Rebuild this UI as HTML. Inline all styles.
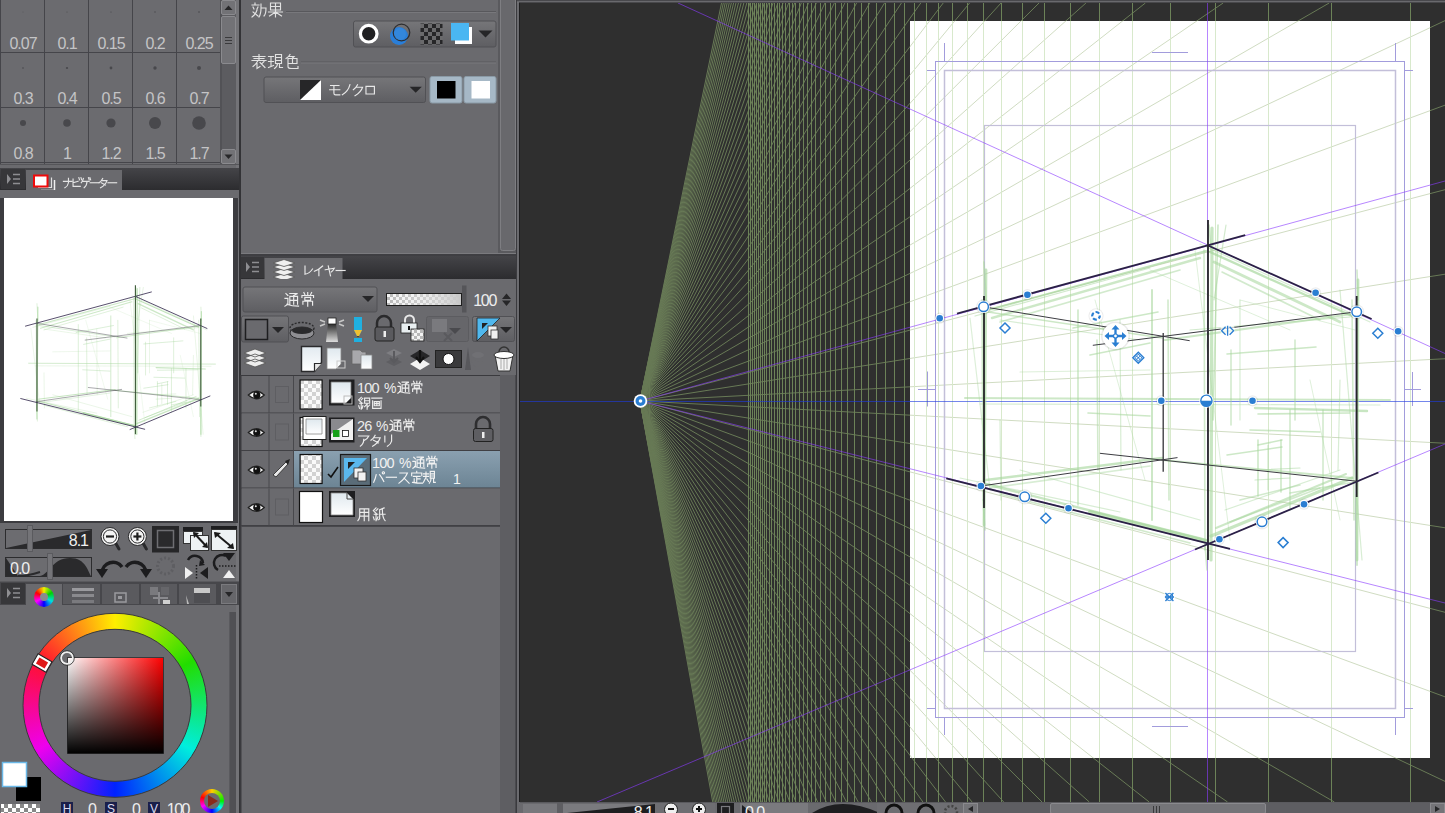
<!DOCTYPE html>
<html><head><meta charset="utf-8"><style>
html,body{margin:0;padding:0;width:1445px;height:813px;overflow:hidden;background:#6a6a6e;position:relative}
svg text{font-family:"Liberation Sans",sans-serif}
</style></head><body>
<svg width="1445" height="813" viewBox="0 0 1445 813" style="position:absolute;left:0;top:0">
<defs><clipPath id="cv"><rect x="520" y="3" width="925" height="799"/></clipPath>
<clipPath id="paper"><rect x="910" y="21" width="520" height="737"/></clipPath>
<clipPath id="navc"><rect x="4" y="198" width="229" height="323"/></clipPath></defs>
<rect x="0" y="0" width="241" height="813" fill="#6a6a6e"/><rect x="0" y="0" width="220" height="164" fill="#6b6b6f"/><path d="M0.5 0V164M44.5 0V164M88.5 0V164M132.5 0V164M176.5 0V164M0 52.5H220M0 107.5H220M0 162.5H220" stroke="#45454a" stroke-width="1"/><circle cx="23" cy="12" r="0.4" fill="#48484c"/><text x="23" y="48.5" font-size="16" fill="#c4c4c6" text-anchor="middle" letter-spacing="-1">0.07</text><circle cx="67" cy="12" r="0.5" fill="#48484c"/><text x="67" y="48.5" font-size="16" fill="#c4c4c6" text-anchor="middle" letter-spacing="-1">0.1</text><circle cx="111" cy="12" r="0.6" fill="#48484c"/><text x="111" y="48.5" font-size="16" fill="#c4c4c6" text-anchor="middle" letter-spacing="-1">0.15</text><circle cx="155" cy="12" r="0.7" fill="#48484c"/><text x="155" y="48.5" font-size="16" fill="#c4c4c6" text-anchor="middle" letter-spacing="-1">0.2</text><circle cx="199" cy="12" r="0.8" fill="#48484c"/><text x="199" y="48.5" font-size="16" fill="#c4c4c6" text-anchor="middle" letter-spacing="-1">0.25</text><circle cx="23" cy="68" r="0.8" fill="#48484c"/><text x="23" y="104" font-size="16" fill="#c4c4c6" text-anchor="middle" letter-spacing="-1">0.3</text><circle cx="67" cy="68" r="1.1" fill="#48484c"/><text x="67" y="104" font-size="16" fill="#c4c4c6" text-anchor="middle" letter-spacing="-1">0.4</text><circle cx="111" cy="68" r="1.4" fill="#48484c"/><text x="111" y="104" font-size="16" fill="#c4c4c6" text-anchor="middle" letter-spacing="-1">0.5</text><circle cx="155" cy="68" r="1.7" fill="#48484c"/><text x="155" y="104" font-size="16" fill="#c4c4c6" text-anchor="middle" letter-spacing="-1">0.6</text><circle cx="199" cy="68" r="2.0" fill="#48484c"/><text x="199" y="104" font-size="16" fill="#c4c4c6" text-anchor="middle" letter-spacing="-1">0.7</text><circle cx="23" cy="123" r="3.0" fill="#48484c"/><text x="23" y="159" font-size="16" fill="#c4c4c6" text-anchor="middle" letter-spacing="-1">0.8</text><circle cx="67" cy="123" r="3.8" fill="#48484c"/><text x="67" y="159" font-size="16" fill="#c4c4c6" text-anchor="middle" letter-spacing="-1">1</text><circle cx="111" cy="123" r="4.6" fill="#48484c"/><text x="111" y="159" font-size="16" fill="#c4c4c6" text-anchor="middle" letter-spacing="-1">1.2</text><circle cx="155" cy="123" r="6.0" fill="#48484c"/><text x="155" y="159" font-size="16" fill="#c4c4c6" text-anchor="middle" letter-spacing="-1">1.5</text><circle cx="199" cy="123" r="6.8" fill="#48484c"/><text x="199" y="159" font-size="16" fill="#c4c4c6" text-anchor="middle" letter-spacing="-1">1.7</text><rect x="220" y="0" width="16" height="164" fill="#5c5c60"/><rect x="220.5" y="0" width="1" height="164" fill="#48484c"/><rect x="221.5" y="0.5" width="14" height="14" rx="1.5" fill="#727276" stroke="#8a8a8e" stroke-width="1"/><path d="M224.5 10.0H232.5L228.5 5.5Z" fill="#262628"/><rect x="221.5" y="149.5" width="14" height="14" rx="1.5" fill="#727276" stroke="#8a8a8e" stroke-width="1"/><path d="M224.5 154.5H232.5L228.5 159.0Z" fill="#262628"/><rect x="221.5" y="16.5" width="14" height="47" rx="1.5" fill="#727276" stroke="#8a8a8e" stroke-width="1"/><path d="M225 37.5H232M225 40.5H232M225 43.5H232" stroke="#3a3a3c" stroke-width="1"/><rect x="236" y="0" width="3" height="813" fill="#737377"/><rect x="239" y="0" width="2" height="813" fill="#333336"/><rect x="0" y="164" width="239" height="1" fill="#555559"/><defs><linearGradient id="tabg" x1="0" y1="0" x2="0" y2="1"><stop offset="0" stop-color="#444448"/><stop offset="1" stop-color="#2c2c2f"/></linearGradient></defs><rect x="0" y="168" width="239" height="22" fill="url(#tabg)"/><rect x="1" y="169" width="24" height="20" fill="#37373a"/><path d="M7 174V184L11 179Z" fill="#8e8e92"/><path d="M13 174.5H20M13 179H20M13 183.5H20" stroke="#8e8e92" stroke-width="1.6"/><rect x="26" y="170" width="96" height="28" fill="#6a6a6e"/><path d="M41 190.5H54.5V180" fill="none" stroke="#f0f0f0" stroke-width="1.5"/><path d="M38 187.5H51.5V177.5" fill="none" stroke="#e0e0e0" stroke-width="1.2"/><rect x="34" y="175.5" width="13.5" height="11" fill="#ffffff" stroke="#ee0a0a" stroke-width="2"/><g fill="none" stroke="#e4e4e4" stroke-width="1.60" stroke-linecap="square"><path transform="translate(62.00,177.00) scale(0.7188)" d="M2 6H14M9 2V8Q8 13 4 15"/><path transform="translate(70.91,177.00) scale(0.7188)" d="M3 3V13H13M3 8L10 6M11 1L12 4M14 1L15 4"/><path transform="translate(79.83,177.00) scale(0.7188)" d="M5 2Q4 6 2 8M4 6H13M10 6Q10 12 6 15M12 1L13 4M14 1L15 4"/><path transform="translate(88.74,177.00) scale(0.7188)" d="M2 8H14"/><path transform="translate(97.65,177.00) scale(0.7188)" d="M7 2Q5 6 2 8M6 5H13Q11 11 4 15M5 8L11 11"/><path transform="translate(106.56,177.00) scale(0.7188)" d="M2 8H14"/></g><rect x="0" y="190" width="239" height="8" fill="#6a6a6e"/><rect x="0" y="198" width="4" height="325" fill="#3c3c40"/><rect x="233" y="198" width="5" height="325" fill="#3c3c40"/><rect x="4" y="198" width="229" height="323" fill="#ffffff"/><rect x="4" y="521" width="229" height="2" fill="#3c3c40"/><rect x="5.5" y="529.5" width="86" height="19" fill="#6c6c70" stroke="#2c2c2e" stroke-width="1"/><path d="M6 548L91 530V548Z" fill="#2a2a2c"/><text x="88" y="546" font-size="16" fill="#f0f0f0" text-anchor="end" letter-spacing="-1">8.1</text><rect x="27.5" y="525.5" width="5" height="26" fill="#747478" stroke="#5a5a5e" stroke-width="1"/><rect x="5.5" y="557.5" width="86" height="19" fill="#6c6c70" stroke="#2c2c2e" stroke-width="1"/><path d="M6 558L18 576H6Z" fill="#2a2a2c"/><path d="M40 576C50 574 52 558 70 558C86 558 88 572 91 576Z" fill="#2a2a2c"/><path d="M18 576Q28 576 40 572" stroke="#2a2a2c" stroke-width="2" fill="none"/><text x="10" y="574" font-size="16" fill="#f0f0f0" letter-spacing="-1">0.0</text><rect x="47.5" y="553.5" width="5" height="26" fill="#747478" stroke="#5a5a5e" stroke-width="1"/><path d="M115 542L119 549" stroke="#2a2a2c" stroke-width="3" stroke-linecap="round"/><circle cx="110" cy="536.5" r="9" fill="#f4f4f4" stroke="#2a2a2c" stroke-width="1"/><circle cx="110" cy="536.5" r="6.6" fill="#f4f4f4" stroke="#2a2a2c" stroke-width="1"/><path d="M106 536.5H114" stroke="#1e1e1e" stroke-width="2.2"/><path d="M142.4 542L146.4 549" stroke="#2a2a2c" stroke-width="3" stroke-linecap="round"/><circle cx="137.4" cy="536.5" r="9" fill="#f4f4f4" stroke="#2a2a2c" stroke-width="1"/><circle cx="137.4" cy="536.5" r="6.6" fill="#f4f4f4" stroke="#2a2a2c" stroke-width="1"/><path d="M133.4 536.5H141.4" stroke="#1e1e1e" stroke-width="2.2"/><path d="M137.4 532.5V540.5" stroke="#1e1e1e" stroke-width="2.2"/><rect x="152" y="526" width="27" height="26.5" fill="#262628"/><rect x="157.5" y="530.5" width="16" height="17" fill="#2a2a2c" stroke="#6e6e72" stroke-width="1.5"/><rect x="183" y="527" width="20" height="4" fill="#1e1e20"/><rect x="183.5" y="531.5" width="19" height="12" fill="#eef2f4" stroke="#333" stroke-width="1"/><rect x="190.5" y="535.5" width="18" height="15" fill="#eef2f4" stroke="#333" stroke-width="1"/><path d="M194 533L207 547" stroke="#1a1a1a" stroke-width="2"/><path d="M193 532l6 1l-5 5zM208 548l-6 -1l5 -5z" fill="#1a1a1a"/><rect x="211" y="526" width="26" height="4" fill="#1e1e20"/><rect x="211.5" y="529.5" width="25" height="21" fill="#eef2f4" stroke="#333" stroke-width="1"/><path d="M215 533L233 548" stroke="#1a1a1a" stroke-width="2"/><path d="M214 532l7 1l-6 5zM234 549l-7 -1l6 -5z" fill="#1a1a1a"/><path d="M102 573A11 11 0 0 1 122 567" stroke="#1c1c1e" stroke-width="3.5" fill="none"/><path d="M96 569L108 569L102 578Z" fill="#1c1c1e"/><path d="M126 567A11 11 0 0 1 146 573" stroke="#1c1c1e" stroke-width="3.5" fill="none"/><path d="M140 569L152 569L146 578Z" fill="#1c1c1e"/><circle cx="165.5" cy="566" r="8" fill="none" stroke="#5e5e62" stroke-width="3" stroke-dasharray="2 2"/><path d="M188 560A8 8 0 0 1 203 563" stroke="#1c1c1e" stroke-width="2.5" fill="none"/><path d="M200 560l5 5l-6 1z" fill="#1c1c1e"/><path d="M185 567V579L193 573Z" fill="#f0f0f0"/><path d="M208 567V579L200 573Z" fill="#1c1c1e"/><path d="M196.5 565V580" stroke="#1c1c1e" stroke-width="1.5" stroke-dasharray="1.5 1.5"/><path d="M226 556A8 8 0 0 0 218 570" stroke="#1c1c1e" stroke-width="2.5" fill="none"/><path d="M223 553h12l-6 8z" fill="#1c1c1e"/><path d="M223 578h12l-6 -8z" fill="#f0f0f0"/><path d="M219 566H237" stroke="#1c1c1e" stroke-width="1.5" stroke-dasharray="1.5 1.5"/><rect x="0" y="581" width="239" height="1" fill="#5a5a5e"/><rect x="0" y="582" width="239" height="23" fill="#47474b"/><rect x="1" y="583" width="24" height="21" fill="#37373a"/><path d="M7 588V598L11 593Z" fill="#8e8e92"/><path d="M13 588.5H20M13 593H20M13 597.5H20" stroke="#8e8e92" stroke-width="1.6"/><rect x="26" y="584" width="36" height="22" fill="#6a6a6e"/><defs><clipPath id="smallw"><circle cx="44" cy="597" r="10"/></clipPath></defs><g clip-path="url(#smallw)"><foreignObject x="33" y="586" width="22" height="22"><div style="width:22px;height:22px;background:conic-gradient(from 0deg,#f0f000,#00d000,#00e0e0,#0000ff,#ff00ff,#ff0000,#f0f000)"></div></foreignObject></g><circle cx="44" cy="597" r="4" fill="#8a8a8e"/><rect x="63" y="584" width="37" height="20" fill="#5a5a5e"/><rect x="102" y="584" width="37" height="20" fill="#5a5a5e"/><rect x="141" y="584" width="36" height="20" fill="#5a5a5e"/><rect x="179" y="584" width="37" height="20" fill="#5a5a5e"/><rect x="72" y="588" width="22" height="3" fill="#9a9a9e"/><rect x="72" y="594" width="22" height="3" fill="#8a8a8e"/><rect x="72" y="600" width="22" height="3" fill="#7a7a7e"/><rect x="115" y="593" width="11" height="9" fill="none" stroke="#9a9a9e" stroke-width="1.5"/><rect x="118" y="596" width="4" height="3" fill="#9a9a9e"/><rect x="150" y="587" width="8" height="8" fill="#7a7a7e"/><rect x="161" y="587" width="8" height="8" fill="#66666a"/><rect x="163" y="600" width="7" height="4" fill="#d0d0d0"/><path d="M159 592V604M153 598H168" stroke="#8a8a8e" stroke-width="2"/><rect x="194" y="588" width="16" height="5" fill="#c8c8c8"/><rect x="194" y="593" width="16" height="10" fill="#4e4e52"/><path d="M186 595L189 604H187Z" fill="#bbb"/><rect x="221.5" y="584.5" width="15" height="19" fill="#66666a" stroke="#7a7a7e" stroke-width="1"/><path d="M225 592H233L229 597Z" fill="#262628"/><rect x="229" y="612" width="7" height="201" fill="#505054"/><rect x="229" y="612" width="1" height="201" fill="#5a5a5e"/><defs><mask id="ringm"><rect x="0" y="600" width="240" height="213" fill="#000"/><circle cx="115" cy="705.3" r="92" fill="#fff"/><circle cx="115" cy="705.3" r="76" fill="#000"/></mask><linearGradient id="svw" x1="0" y1="0" x2="1" y2="0"><stop offset="0" stop-color="#fff"/><stop offset="1" stop-color="#ff0000"/></linearGradient><linearGradient id="svb" x1="0" y1="0" x2="0" y2="1"><stop offset="0" stop-color="#000" stop-opacity="0"/><stop offset="1" stop-color="#000" stop-opacity="1"/></linearGradient></defs><g mask="url(#ringm)"><foreignObject x="23" y="613" width="184" height="185"><div style="width:184px;height:185px;background:conic-gradient(from 0deg,#ffee00,#22dd00 60deg,#00eedd 120deg,#0022ff 180deg,#ee00ee 240deg,#ff1030 300deg,#ffee00 360deg)"></div></foreignObject></g><circle cx="115" cy="705.3" r="92" fill="none" stroke="#3a3a3c" stroke-width="1"/><circle cx="115" cy="705.3" r="76" fill="none" stroke="#3a3a3c" stroke-width="1"/><rect x="67.5" y="657.5" width="96" height="96" fill="url(#svw)" stroke="#3a3a3c" stroke-width="1"/><rect x="67.5" y="657.5" width="96" height="96" fill="url(#svb)"/><circle cx="67" cy="658" r="6" fill="none" stroke="#f0f0f0" stroke-width="2"/><circle cx="67" cy="658" r="7.3" fill="none" stroke="#2a2a2a" stroke-width="0.8"/><g transform="translate(42,663) rotate(30)"><rect x="-8" y="-6" width="16" height="12" fill="#fff" stroke="#222" stroke-width="1"/><rect x="-5" y="-3.5" width="10" height="7" fill="#e01818"/></g><rect x="16" y="777" width="25" height="24" fill="#000"/><rect x="2.5" y="762.5" width="24" height="24" fill="#fff" stroke="#6ab8e8" stroke-width="1.5"/><defs><pattern id="chk" x="0" y="0" width="8" height="8" patternUnits="userSpaceOnUse"><rect width="8" height="8" fill="#fff"/><rect width="4" height="4" fill="#888"/><rect x="4" y="4" width="4" height="4" fill="#888"/></pattern></defs><rect x="1" y="804" width="39" height="9" fill="url(#chk)"/><rect x="61" y="802" width="12" height="11" fill="#1a1f4a"/><text x="67" y="813" font-size="12" fill="#dcdcf0" text-anchor="middle">H</text><rect x="105" y="802" width="12" height="11" fill="#1a1f4a"/><text x="111" y="813" font-size="12" fill="#dcdcf0" text-anchor="middle">S</text><rect x="148" y="802" width="12" height="11" fill="#1a1f4a"/><text x="154" y="813" font-size="12" fill="#dcdcf0" text-anchor="middle">V</text><text x="96" y="815" font-size="16" fill="#eeeeee" text-anchor="end" letter-spacing="-1">0</text><text x="140" y="815" font-size="16" fill="#eeeeee" text-anchor="end" letter-spacing="-1">0</text><text x="189" y="815" font-size="16" fill="#eeeeee" text-anchor="end" letter-spacing="-1.5">100</text><defs><mask id="smr"><rect x="195" y="785" width="35" height="30" fill="#000"/><circle cx="212" cy="801" r="12" fill="#fff"/><circle cx="212" cy="801" r="8" fill="#000"/></mask></defs><g mask="url(#smr)"><foreignObject x="199" y="788" width="26" height="26"><div style="width:26px;height:26px;background:conic-gradient(from 0deg,#ffcc00,#00ee00 90deg,#00ffff 130deg,#0000ff 180deg,#ff00ff 240deg,#ff0000 290deg,#ffcc00 360deg)"></div></foreignObject></g><path d="M208 795L218 801L208 807Z" fill="#8a2a1a"/><rect x="241" y="0" width="276" height="813" fill="#6a6a6e"/><defs><linearGradient id="btng" x1="0" y1="0" x2="0" y2="1"><stop offset="0" stop-color="#767679"/><stop offset="1" stop-color="#5e5e62"/></linearGradient><linearGradient id="docg" x1="0" y1="0" x2="0" y2="1"><stop offset="0" stop-color="#dfe8ee"/><stop offset="1" stop-color="#ffffff"/></linearGradient><linearGradient id="selg" x1="0" y1="0" x2="0" y2="1"><stop offset="0" stop-color="#8aa0b0"/><stop offset="1" stop-color="#6c8494"/></linearGradient><linearGradient id="opg" x1="0" y1="0" x2="1" y2="0"><stop offset="0" stop-color="#fff" stop-opacity="0"/><stop offset="1" stop-color="#c8c8c8" stop-opacity="1"/></linearGradient><pattern id="chk2" x="0" y="0" width="8" height="8" patternUnits="userSpaceOnUse"><rect width="8" height="8" fill="#fafafa"/><rect width="4" height="4" fill="#d2d2d2"/><rect x="4" y="4" width="4" height="4" fill="#d2d2d2"/></pattern><pattern id="chk3" x="0" y="0" width="6" height="6" patternUnits="userSpaceOnUse"><rect width="6" height="6" fill="#f4f4f4"/><rect width="3" height="3" fill="#b8b8b8"/><rect x="3" y="3" width="3" height="3" fill="#b8b8b8"/></pattern><pattern id="chk4" x="0" y="0" width="8" height="8" patternUnits="userSpaceOnUse"><rect width="8" height="8" fill="#6a6a6c"/><rect width="4" height="4" fill="#262628"/><rect x="4" y="4" width="4" height="4" fill="#262628"/></pattern></defs><g fill="none" stroke="#e2e2e2" stroke-width="1.15" stroke-linecap="square"><path transform="translate(251.00,2.00) scale(1.0000)" d="M4 1V3M1 3H8M2 5L3 7M7 5L6 7M6 8Q5 12 1 15M2 10L7 14M10 2V6Q10 12 8 15M10 6H15Q15 12 13 14"/><path transform="translate(267.50,2.00) scale(1.0000)" d="M3 1H13V8H3ZM3 4.5H13M8 1V15M1 10H15M8 10L2 14M8 10L14 14"/></g><path d="M286 11.5H496" stroke="#58585c" stroke-width="1"/><path d="M286 12.5H496" stroke="#78787c" stroke-width="1"/><rect x="353.5" y="21" width="142.5" height="26" rx="2" fill="url(#btng)" stroke="#515155" stroke-width="1"/><circle cx="368.7" cy="33.7" r="8.3" fill="#202022" stroke="#ffffff" stroke-width="3.2"/><circle cx="399" cy="36" r="9" fill="#2a7ed8"/><circle cx="401.5" cy="32.5" r="8.3" fill="none" stroke="#2e2e30" stroke-width="1.2"/><circle cx="400" cy="34" r="6" fill="#3a8ee0" fill-opacity="0.6"/><rect x="420.5" y="23.5" width="22" height="21" fill="url(#chk4)"/><rect x="455" y="27" width="17" height="17" fill="#ffffff"/><rect x="451" y="23" width="18" height="17.5" fill="#4ab6f2"/><path d="M478.5 30.5H492.5L485.5 37.5Z" fill="#262628"/><g fill="none" stroke="#e2e2e2" stroke-width="1.15" stroke-linecap="square"><path transform="translate(251.00,53.50) scale(1.0000)" d="M8 1V7M2 3H14M3 5H13M1 7H15M7 7Q5 11 2 13M6 10V15L9 13M9 9L14 14M13 8L11 10"/><path transform="translate(267.50,53.50) scale(1.0000)" d="M1 3H6M1 8H6M3.5 3V13M1 14L6 12M8 1H14V10H8ZM8 4H14M8 7H14M10 10Q10 13 7 15M12 10V14H15"/><path transform="translate(284.00,53.50) scale(1.0000)" d="M6 1Q5 3 2 5M5 3H10L8 5M4 5H13V10H4ZM8.5 5V10M4 10V13Q4 15 7 15H14V13"/></g><path d="M301 62H496" stroke="#58585c" stroke-width="1"/><path d="M301 63H496" stroke="#78787c" stroke-width="1"/><rect x="264" y="77" width="161.5" height="25.5" rx="2" fill="url(#btng)" stroke="#515155" stroke-width="1"/><rect x="300" y="80" width="21" height="20" fill="#ffffff"/><path d="M300 80H321L300 100Z" fill="#262628"/><g fill="none" stroke="#e8e8e8" stroke-width="1.36" stroke-linecap="square"><path transform="translate(328.00,83.00) scale(0.8438)" d="M3 3H13M2 8H14M7 3V12Q7 14 9 14H14"/><path transform="translate(339.81,83.00) scale(0.8438)" d="M12 2Q10 10 3 14"/><path transform="translate(351.62,83.00) scale(0.8438)" d="M7 2Q5 6 2 8M6 5H13Q11 11 4 15"/><path transform="translate(363.44,83.00) scale(0.8438)" d="M3 4H13V13H3Z"/></g><path d="M409.6 86.8H421.8L415.7 92.7Z" fill="#262628"/><rect x="430" y="76.5" width="32" height="26.5" rx="2" fill="#a6b8c6" stroke="#8a9aa6" stroke-width="1"/><rect x="464" y="76.5" width="32" height="26.5" rx="2" fill="#a6b8c6" stroke="#8a9aa6" stroke-width="1"/><rect x="437" y="81" width="18.5" height="17.5" fill="#000"/><rect x="471.5" y="81" width="18.5" height="17.5" fill="#fff"/><rect x="498" y="0" width="19" height="255" fill="#5a5a5e"/><rect x="500.5" y="-3" width="15" height="253.5" rx="2" fill="#68686c" stroke="#7e7e82" stroke-width="1"/><rect x="516" y="0" width="1" height="255" fill="#3e3e42"/><rect x="241" y="253" width="276" height="1" fill="#7a7a7e"/><rect x="241" y="254" width="276" height="2" fill="#3e3e42"/><rect x="241" y="256" width="276" height="23" fill="url(#tabg)"/><rect x="241" y="257" width="23" height="21" fill="#37373a"/><path d="M246 262V272L250 267Z" fill="#8e8e92"/><path d="M252 262.5H259M252 267H259M252 271.5H259" stroke="#8e8e92" stroke-width="1.6"/><rect x="264.5" y="258" width="78" height="25" fill="#6a6a6e"/><path d="M273 277L284 273.5L295 277L284 280.5Z" fill="#f0f0f0" stroke="#555" stroke-width="0.8"/><path d="M273 272L284 268.5L295 272L284 275.5Z" fill="#f0f0f0" stroke="#555" stroke-width="0.8"/><path d="M273 267L284 263.5L295 267L284 270.5Z" fill="#f0f0f0" stroke="#555" stroke-width="0.8"/><path d="M273 263L284 259.5L295 263L284 266.5Z" fill="#f0f0f0" stroke="#555" stroke-width="0.8"/><g fill="none" stroke="#e8e8e8" stroke-width="1.53" stroke-linecap="square"><path transform="translate(302.00,264.50) scale(0.7500)" d="M4 2V13Q10 12 14 6"/><path transform="translate(312.88,264.50) scale(0.7500)" d="M13 2Q8 7 2 9M8 6V15"/><path transform="translate(323.75,264.50) scale(0.7500)" d="M2 7L14 5Q12 9 10 10M6 2L9 15"/><path transform="translate(334.62,264.50) scale(0.7500)" d="M2 8H14"/></g><rect x="241" y="279" width="276" height="534" fill="#6a6a6e"/><rect x="243" y="287" width="134" height="25" rx="2" fill="url(#btng)" stroke="#515155" stroke-width="1"/><g fill="none" stroke="#ececec" stroke-width="1.19" stroke-linecap="square"><path transform="translate(284.00,291.60) scale(0.9688)" d="M6 2H14L10 4M6 5H14V13M6 5V13M6 9H14M10 5V13M2 2L4 4M1 7H4V13L1 15M3 13Q8 15 15 15"/><path transform="translate(299.98,291.60) scale(0.9688)" d="M8 1V3M4 1L5 3M12 1L11 3M2 6V4H14V6M5 6H11V9H5ZM3 13V10H13V14M8 9V15"/></g><path d="M362 296H374L368 302Z" fill="#262628"/><rect x="386.5" y="293.5" width="75" height="12" fill="url(#chk3)" stroke="#1e1e1e" stroke-width="1"/><rect x="387" y="294" width="74" height="11" fill="url(#opg)"/><rect x="462" y="285.5" width="4.5" height="27" fill="#555559"/><text x="496" y="305.5" font-size="16" fill="#eeeeee" text-anchor="end" letter-spacing="-1.3">100</text><path d="M502 299L506.5 293.5L511 299ZM502 300.5L506.5 306L511 300.5Z" fill="#262628"/><rect x="241.5" y="316" width="47" height="26" rx="2" fill="url(#btng)" stroke="#515155" stroke-width="1"/><rect x="245.5" y="319.5" width="22" height="20" fill="#6a6a6e" stroke="#1e1e20" stroke-width="1.5"/><path d="M272 327H284L278 333Z" fill="#262628"/><ellipse cx="302" cy="328" rx="12" ry="5.5" fill="none" stroke="#2a2a2c" stroke-width="1.4" stroke-dasharray="2 1.5"/><ellipse cx="302" cy="333" rx="12" ry="6" fill="#8e8e92" stroke="#2a2a2c" stroke-width="1"/><ellipse cx="302" cy="330.5" rx="10" ry="3.6" fill="#2a2a2c"/><path d="M328 323H336L338 342H326Z" fill="url(#lhg)"/><rect x="328" y="318" width="8" height="6" fill="#fff" stroke="#222" stroke-width="0.8"/><path d="M320 320L325 322M320 326L325 324M344 320L339 322M344 326L339 324" stroke="#c8c8c8" stroke-width="1.5"/><defs><linearGradient id="lhg" x1="0" y1="0" x2="0" y2="1"><stop offset="0" stop-color="#222"/><stop offset="1" stop-color="#ddd"/></linearGradient></defs><path d="M354 317H362V330L358 338L354 330Z" fill="#20b0e0"/><path d="M354 330L358 338L362 330Z" fill="#f0c030"/><path d="M357 336L358 338L359 336Z" fill="#222"/><rect x="354" y="338" width="8" height="4" fill="#20b0e0"/><path d="M377 327V323A7 7 0 0 1 391 323V327" stroke="#2a2a2c" stroke-width="2.5" fill="none"/><rect x="375" y="327" width="19" height="14" rx="2" fill="#5a5a5e" stroke="#222" stroke-width="1"/><rect x="383.5" y="331" width="2.5" height="6" fill="#eee"/><path d="M405 323V320A4.5 4.5 0 0 1 414 320V323" stroke="#e8e8e8" stroke-width="2" fill="none"/><rect x="401" y="323" width="16" height="10" fill="#e8eef0" stroke="#222" stroke-width="0.8"/><rect x="408" y="326" width="2" height="4" fill="#111"/><rect x="411" y="329" width="13" height="12" fill="url(#chk3)" stroke="#222" stroke-width="0.8"/><rect x="426.5" y="316.5" width="42" height="25" rx="2" fill="#66666a" stroke="#5c5c60" stroke-width="1"/><rect x="432" y="319" width="15" height="13" fill="#7a7a7e"/><path d="M449 328H461L455 334Z" fill="#4a4a4e"/><path d="M444 333L452 341M452 333L444 341" stroke="#5a5a5e" stroke-width="2"/><rect x="472.5" y="316.5" width="42" height="25" rx="2" fill="url(#btng)" stroke="#515155" stroke-width="1"/><path d="M477 318H500L477 341Z" fill="#50b8ee" stroke="#222" stroke-width="0.8"/><path d="M482 323H488L482 329Z" fill="#222"/><rect x="488" y="326" width="9" height="10" fill="#f0f0f0" stroke="#333" stroke-width="0.8"/><rect x="491" y="330" width="7" height="9" fill="#f0f0f0" stroke="#333" stroke-width="0.8"/><path d="M500 327H512L506 333Z" fill="#262628"/><path d="M255 349L266 353L255 357L244 353Z M255 354L266 358L255 362L244 358Z M255 359L266 363L255 367L244 363Z" fill="#eee" stroke="#555" stroke-width="0.8"/><path d="M301.5 346.5H321.5V362.5L314.5 371.5H301.5Z" fill="url(#docg2)" stroke="#2a2a2c" stroke-width="1.4"/><path d="M314.5 371.5V363.5H321.5" fill="#e8e8e8" stroke="#2a2a2c" stroke-width="1.2"/><defs><linearGradient id="docg2" x1="0" y1="0" x2="0" y2="1"><stop offset="0" stop-color="#e2eaf0"/><stop offset="1" stop-color="#ffffff"/></linearGradient></defs><path d="M327 348H341V364L336 369H327Z" fill="url(#docg)" stroke="#888" stroke-width="0.8"/><rect x="337" y="361" width="8" height="7" fill="none" stroke="#ccc" stroke-width="1"/><path d="M352 350H360L362 352H366V364H352Z" fill="#a8a8ac" stroke="#666" stroke-width="0.8"/><path d="M361 355H372V369H361Z" fill="url(#docg)" stroke="#888" stroke-width="0.8"/><path d="M386 353L394 349L402 353L394 357Z" fill="#7e7e82"/><path d="M386 362L394 358L402 362L394 366Z" fill="#5e5e62"/><path d="M394 351V362M390 358L394 362L398 358" stroke="#5a5a5e" stroke-width="2" fill="none"/><path d="M410 356L420 350L430 356L420 362Z" fill="#262628"/><path d="M410 364L420 358L430 364L420 370Z" fill="#f4f4f4"/><path d="M420 350V361M416 357L420 362L424 357" stroke="#111" stroke-width="2.2" fill="none"/><rect x="435.5" y="350.5" width="26" height="17" fill="#3a3a3c" stroke="#222" stroke-width="1"/><circle cx="448.5" cy="359" r="5.5" fill="#fff" stroke="#111" stroke-width="1"/><path d="M468 347L465 370L471 370Z" fill="#58585c"/><ellipse cx="478" cy="355" rx="6" ry="3" fill="#707074"/><path d="M470 360L484 362L476 368Z" fill="#6a6a6e"/><path d="M495 355A10 4 0 0 1 513 355L510 371H498Z" fill="#f2f2f2" stroke="#333" stroke-width="1"/><ellipse cx="504" cy="355" rx="10" ry="3.5" fill="#fff" stroke="#333" stroke-width="1"/><path d="M499 352A5 5 0 0 1 509 352" stroke="#333" stroke-width="1.5" fill="none"/><path d="M501 359V369M504 359V370M507 359V369" stroke="#aaa" stroke-width="1"/><rect x="241" y="375" width="259" height="1" fill="#3a3a3e"/><rect x="500" y="375" width="17" height="438" fill="#5e5e62"/><rect x="515" y="375" width="2" height="438" fill="#4a4a4e"/><rect x="240" y="375" width="1.5" height="438" fill="#3a3a3e"/><rect x="242" y="376" width="258" height="37" fill="#6a6a6e"/><rect x="241" y="412.5" width="259" height="1" fill="#404044"/><rect x="268.5" y="376" width="1" height="37" fill="#48484c"/><rect x="293" y="376" width="1" height="37" fill="#48484c"/><path d="M248.3 395Q256.3 387.5 264.3 395Q256.3 402.5 248.3 395Z" fill="#f4f4f4" stroke="#222" stroke-width="1.2"/><circle cx="256.8" cy="395" r="3.6" fill="#111"/><circle cx="255.8" cy="393.8" r="1" fill="#ddd"/><rect x="275.5" y="386.5" width="13" height="16" fill="none" stroke="#5e5e62" stroke-width="1"/><rect x="242" y="413.5" width="258" height="37" fill="#6a6a6e"/><rect x="241" y="450.0" width="259" height="1" fill="#404044"/><rect x="268.5" y="413.5" width="1" height="37" fill="#48484c"/><rect x="293" y="413.5" width="1" height="37" fill="#48484c"/><path d="M248.3 432.5Q256.3 425.0 264.3 432.5Q256.3 440.0 248.3 432.5Z" fill="#f4f4f4" stroke="#222" stroke-width="1.2"/><circle cx="256.8" cy="432.5" r="3.6" fill="#111"/><circle cx="255.8" cy="431.3" r="1" fill="#ddd"/><rect x="275.5" y="424.0" width="13" height="16" fill="none" stroke="#5e5e62" stroke-width="1"/><rect x="242" y="451" width="258" height="37" fill="#6a6a6e"/><rect x="294" y="451" width="206" height="37" fill="url(#selg)"/><rect x="241" y="487.5" width="259" height="1" fill="#404044"/><rect x="268.5" y="451" width="1" height="37" fill="#48484c"/><rect x="293" y="451" width="1" height="37" fill="#48484c"/><path d="M248.3 470Q256.3 462.5 264.3 470Q256.3 477.5 248.3 470Z" fill="#f4f4f4" stroke="#222" stroke-width="1.2"/><circle cx="256.8" cy="470" r="3.6" fill="#111"/><circle cx="255.8" cy="468.8" r="1" fill="#ddd"/><rect x="242" y="488.5" width="258" height="37" fill="#6a6a6e"/><rect x="241" y="525.0" width="259" height="1" fill="#404044"/><rect x="268.5" y="488.5" width="1" height="37" fill="#48484c"/><rect x="293" y="488.5" width="1" height="37" fill="#48484c"/><path d="M248.3 507.5Q256.3 500.0 264.3 507.5Q256.3 515.0 248.3 507.5Z" fill="#f4f4f4" stroke="#222" stroke-width="1.2"/><circle cx="256.8" cy="507.5" r="3.6" fill="#111"/><circle cx="255.8" cy="506.3" r="1" fill="#ddd"/><rect x="275.5" y="499.0" width="13" height="16" fill="none" stroke="#5e5e62" stroke-width="1"/><rect x="300.1" y="380.0" width="22" height="29" fill="url(#chk2)" stroke="#111" stroke-width="1.2"/><rect x="329" y="379.5" width="25.5" height="26" fill="#1e1e20"/><path d="M331 382H351V398L346 403H331Z" fill="url(#docg)" stroke="#777" stroke-width="0.8"/><rect x="344" y="396" width="8" height="8" fill="none" stroke="#bbb" stroke-width="1"/><text x="357" y="393" font-size="14.5" fill="#ececec" letter-spacing="-0.8">100</text><text x="384" y="393" font-size="14" fill="#ececec">%</text><g fill="none" stroke="#ececec" stroke-width="1.36" stroke-linecap="square"><path transform="translate(397.00,380.50) scale(0.8438)" d="M6 2H14L10 4M6 5H14V13M6 5V13M6 9H14M10 5V13M2 2L4 4M1 7H4V13L1 15M3 13Q8 15 15 15"/><path transform="translate(410.08,380.50) scale(0.8438)" d="M8 1V3M4 1L5 3M12 1L11 3M2 6V4H14V6M5 6H11V9H5ZM3 13V10H13V14M8 9V15"/></g><g fill="none" stroke="#ececec" stroke-width="1.36" stroke-linecap="square"><path transform="translate(357.00,396.50) scale(0.8438)" d="M2 4L5 1M5 4L7 2M2 4L6 8M3 8H7M5 8V15M2 11L3 14M7 11L6 14M9 2H15V8H9ZM9 5H15M12 8V15M9 12L11 10M15 10L13 12"/><path transform="translate(370.08,396.50) scale(0.8438)" d="M2 2H14M3 5V14H13V5M5 6H11V11H5ZM8 6V11M5 8.5H11"/></g><rect x="300.1" y="417.5" width="22" height="29" fill="url(#chk2)" stroke="#111" stroke-width="1.2"/><rect x="303" y="416.5" width="23" height="23" fill="#fff" stroke="#222" stroke-width="1"/><path d="M306 419H322V434H306Z" fill="url(#docg)" stroke="#888" stroke-width="0.8"/><rect x="329" y="417.5" width="25.5" height="25" fill="#1e1e20"/><rect x="331" y="419" width="22" height="21" fill="#f0f0f0"/><path d="M331 419H353L331 434Z" fill="#8a8a8e"/><rect x="333" y="430" width="6.5" height="7" fill="#18a018"/><rect x="342.5" y="430.5" width="6" height="6" fill="#fff" stroke="#111" stroke-width="0.8"/><text x="357" y="431" font-size="14.5" fill="#ececec" letter-spacing="-0.8">26</text><text x="376" y="431" font-size="14" fill="#ececec">%</text><g fill="none" stroke="#ececec" stroke-width="1.36" stroke-linecap="square"><path transform="translate(389.00,418.50) scale(0.8438)" d="M6 2H14L10 4M6 5H14V13M6 5V13M6 9H14M10 5V13M2 2L4 4M1 7H4V13L1 15M3 13Q8 15 15 15"/><path transform="translate(402.08,418.50) scale(0.8438)" d="M8 1V3M4 1L5 3M12 1L11 3M2 6V4H14V6M5 6H11V9H5ZM3 13V10H13V14M8 9V15"/></g><g fill="none" stroke="#ececec" stroke-width="1.36" stroke-linecap="square"><path transform="translate(357.00,433.50) scale(0.8438)" d="M2 3H14Q12 7 9 8M8 7Q8 12 4 15"/><path transform="translate(369.23,433.50) scale(0.8438)" d="M7 2Q5 6 2 8M6 5H13Q11 11 4 15M5 8L11 11"/><path transform="translate(381.47,433.50) scale(0.8438)" d="M4 3V10M12 2V9Q11 13 7 15"/></g><path d="M476 429V424A7 7 0 0 1 490 424V429" stroke="#2e2e30" stroke-width="2.6" fill="none"/><rect x="473.5" y="428.5" width="19.5" height="13" rx="2" fill="#5e5e62" stroke="#222" stroke-width="1"/><rect x="482" y="432" width="2.5" height="6" fill="#eee"/><path d="M273 475L286 462L288 464L276 477Z" fill="#e8e8e8" stroke="#222" stroke-width="0.8"/><path d="M285 461L290 459L288 465Z" fill="#222"/><rect x="300.1" y="454.5" width="22" height="29" fill="url(#chk2)" stroke="#111" stroke-width="1.2"/><path d="M328 474L331 477L338 467" stroke="#111" stroke-width="1.6" fill="none"/><rect x="340.5" y="454.5" width="30" height="31" fill="#5a6c78" stroke="#1a1a1a" stroke-width="1.2"/><path d="M344 458H367L344 482Z" fill="#5ab8ee"/><path d="M348 462H355L348 469Z" fill="#222"/><rect x="354" y="468" width="9" height="10" fill="#f2f2f2" stroke="#333" stroke-width="0.8"/><rect x="358" y="472" width="8" height="9" fill="#f2f2f2" stroke="#333" stroke-width="0.8"/><text x="372" y="468" font-size="14.5" fill="#f2f2f2" letter-spacing="-0.8">100</text><text x="399" y="468" font-size="14" fill="#f2f2f2">%</text><g fill="none" stroke="#f2f2f2" stroke-width="1.36" stroke-linecap="square"><path transform="translate(412.00,455.50) scale(0.8438)" d="M6 2H14L10 4M6 5H14V13M6 5V13M6 9H14M10 5V13M2 2L4 4M1 7H4V13L1 15M3 13Q8 15 15 15"/><path transform="translate(425.08,455.50) scale(0.8438)" d="M8 1V3M4 1L5 3M12 1L11 3M2 6V4H14V6M5 6H11V9H5ZM3 13V10H13V14M8 9V15"/></g><g fill="none" stroke="#f2f2f2" stroke-width="1.36" stroke-linecap="square"><path transform="translate(372.00,470.50) scale(0.8438)" d="M5 5Q4 10 2 14M9 5Q12 9 14 13M13.5 1.5A1.3 1.3 0 1 1 13.49 1.5"/><path transform="translate(384.66,470.50) scale(0.8438)" d="M2 8H14"/><path transform="translate(397.31,470.50) scale(0.8438)" d="M3 3H12Q9 10 2 15M8 9L14 15"/><path transform="translate(409.97,470.50) scale(0.8438)" d="M8 1V3M2 6V3H14V6M4 7H12M8 7V14M5 10V14M8 10H12M3 14Q8 15 15 15"/><path transform="translate(422.62,470.50) scale(0.8438)" d="M4 2V8M1 4H7M1 7H7M4 8L1 14M5 10L7 13M9 1H14V9H9ZM9 4H14M9 6.5H14M10 9Q10 13 8 15M13 9V14H15"/></g><text x="453" y="484" font-size="14" fill="#f2f2f2">1</text><rect x="299.5" y="491.5" width="23" height="31" fill="#fff" stroke="#111" stroke-width="1.2"/><rect x="329" y="491" width="26" height="26" fill="#1e1e20"/><path d="M331 493H347L353 499V515H331Z" fill="url(#docg)" stroke="#888" stroke-width="0.8"/><path d="M347 493V499H353" fill="none" stroke="#444" stroke-width="1"/><g fill="none" stroke="#ececec" stroke-width="1.27" stroke-linecap="square"><path transform="translate(357.00,507.00) scale(0.9062)" d="M3 2V10Q3 13 1 15M3 2H13V15M3 6H13M3 10H13M8 2V15"/><path transform="translate(371.50,507.00) scale(0.9062)" d="M2 4L5 1M5 4L7 2M2 4L6 8M3 8H7M5 8V15M2 11L3 14M7 11L6 14M9 3L14 1M9 3V13L8 14M9 8H15M12 3Q12 12 15 15"/></g><rect x="241" y="526" width="259" height="1" fill="#48484c"/><rect x="516" y="0" width="4" height="813" fill="#5c5c60"/><rect x="516" y="0" width="1" height="813" fill="#3a3a3e"/><rect x="517.5" y="2" width="1" height="800" fill="#7a7a7e"/><rect x="519" y="3" width="1" height="799" fill="#1e1e20"/><rect x="517" y="0" width="928" height="1.5" fill="#48484c"/><rect x="517" y="1.5" width="928" height="1" fill="#7a7a7e"/><rect x="519" y="2.5" width="926" height="1" fill="#1e1e20"/><rect x="520" y="3" width="925" height="799" fill="#2f2f2f"/><g clip-path="url(#cv)"><path d="M640.00 401.00L721.52 3.00M640.00 401.00L723.31 3.00M640.00 401.00L725.18 3.00M640.00 401.00L727.14 3.00M640.00 401.00L729.19 3.00M640.00 401.00L731.34 3.00M640.00 401.00L733.59 3.00M640.00 401.00L735.96 3.00M640.00 401.00L738.45 3.00M640.00 401.00L741.08 3.00M640.00 401.00L743.85 3.00M640.00 401.00L746.77 3.00M640.00 401.00L749.87 3.00M640.00 401.00L753.15 3.00M640.00 401.00L756.63 3.00M640.00 401.00L760.33 3.00M640.00 401.00L764.28 3.00M640.00 401.00L768.49 3.00M640.00 401.00L773.00 3.00M640.00 401.00L777.84 3.00M640.00 401.00L783.04 3.00M640.00 401.00L788.65 3.00M640.00 401.00L794.71 3.00M640.00 401.00L801.30 3.00M640.00 401.00L808.47 3.00M640.00 401.00L816.30 3.00M640.00 401.00L824.90 3.00M640.00 401.00L834.38 3.00M640.00 401.00L844.89 3.00M640.00 401.00L856.60 3.00M640.00 401.00L869.73 3.00M640.00 401.00L884.55 3.00M640.00 401.00L901.41 3.00M640.00 401.00L920.78 3.00M640.00 401.00L943.24 3.00M640.00 401.00L969.61 3.00M640.00 401.00L1001.00 3.00M640.00 401.00L1039.00 3.00M640.00 401.00L1085.94 3.00M640.00 401.00L1145.40 3.00M640.00 401.00L1223.15 3.00M640.00 401.00L1329.18 3.00M640.00 401.00L1445.00 20.64M640.00 401.00L1445.00 105.16M640.00 401.00L1445.00 189.69M640.00 401.00L1445.00 274.21M640.00 401.00L1445.00 358.74M640.00 401.00L1445.00 443.26M640.00 401.00L1445.00 527.79M640.00 401.00L1445.00 612.31M640.00 401.00L1445.00 696.84M640.00 401.00L1445.00 781.36M640.00 401.00L1334.37 802.00M640.00 401.00L1227.55 802.00M640.00 401.00L1149.21 802.00M640.00 401.00L1089.30 802.00M640.00 401.00L1042.01 802.00M640.00 401.00L1003.72 802.00M640.00 401.00L972.09 802.00M640.00 401.00L945.52 802.00M640.00 401.00L922.89 802.00M640.00 401.00L903.38 802.00M640.00 401.00L886.39 802.00M640.00 401.00L871.46 802.00M640.00 401.00L858.23 802.00M640.00 401.00L846.44 802.00M640.00 401.00L835.85 802.00M640.00 401.00L826.30 802.00M640.00 401.00L817.63 802.00M640.00 401.00L809.74 802.00M640.00 401.00L802.51 802.00M640.00 401.00L795.88 802.00M640.00 401.00L789.77 802.00M640.00 401.00L784.12 802.00M640.00 401.00L778.87 802.00M640.00 401.00L774.00 802.00M640.00 401.00L769.46 802.00M640.00 401.00L765.21 802.00M640.00 401.00L761.24 802.00M640.00 401.00L757.51 802.00M640.00 401.00L754.00 802.00M640.00 401.00L750.70 802.00M640.00 401.00L747.58 802.00M640.00 401.00L744.63 802.00M640.00 401.00L741.84 802.00M640.00 401.00L739.20 802.00M640.00 401.00L736.68 802.00M640.00 401.00L734.30 802.00M640.00 401.00L732.03 802.00M640.00 401.00L729.86 802.00M640.00 401.00L727.79 802.00M640.00 401.00L725.82 802.00M640.00 401.00L723.94 802.00M640.00 401.00L722.13 802.00M640.00 401.00L720.40 802.00M640.00 401.00L718.74 802.00M640.00 401.00L717.15 802.00M640.00 401.00L715.62 802.00M640.00 401.00L714.16 802.00M640.00 401.00L712.74 802.00" stroke="#687a56" stroke-width="1" fill="none"/><path d="M748.5 3V802M750.5 3V802M752.5 3V802M754.5 3V802M756.5 3V802M758.5 3V802M760.5 3V802M762.5 3V802M764.5 3V802M766.5 3V802M769.5 3V802M771.5 3V802M774.5 3V802M777.5 3V802M779.5 3V802M782.5 3V802M785.5 3V802M789.5 3V802M792.5 3V802M795.5 3V802M799.5 3V802M803.5 3V802M807.5 3V802M811.5 3V802M815.5 3V802M820.5 3V802M825.5 3V802M830.5 3V802M835.5 3V802M841.5 3V802M847.5 3V802M854.5 3V802M861.5 3V802M868.5 3V802M876.5 3V802M885.5 3V802M894.5 3V802M904.5 3V802M914.5 3V802M926.5 3V802M938.5 3V802M952.5 3V802M967.5 3V802M983.5 3V802M1001.5 3V802M1022.5 3V802M1044.5 3V802M1070.5 3V802M1099.5 3V802M1132.5 3V802M1170.5 3V802M1215.5 3V802M1268.5 3V802M1331.5 3V802M1410.5 3V802" stroke="#6c8258" stroke-width="1" fill="none"/></g><rect x="910" y="21" width="520" height="737" fill="#ffffff"/><g clip-path="url(#paper)"><path d="M640.00 401.00L721.52 3.00M640.00 401.00L723.31 3.00M640.00 401.00L725.18 3.00M640.00 401.00L727.14 3.00M640.00 401.00L729.19 3.00M640.00 401.00L731.34 3.00M640.00 401.00L733.59 3.00M640.00 401.00L735.96 3.00M640.00 401.00L738.45 3.00M640.00 401.00L741.08 3.00M640.00 401.00L743.85 3.00M640.00 401.00L746.77 3.00M640.00 401.00L749.87 3.00M640.00 401.00L753.15 3.00M640.00 401.00L756.63 3.00M640.00 401.00L760.33 3.00M640.00 401.00L764.28 3.00M640.00 401.00L768.49 3.00M640.00 401.00L773.00 3.00M640.00 401.00L777.84 3.00M640.00 401.00L783.04 3.00M640.00 401.00L788.65 3.00M640.00 401.00L794.71 3.00M640.00 401.00L801.30 3.00M640.00 401.00L808.47 3.00M640.00 401.00L816.30 3.00M640.00 401.00L824.90 3.00M640.00 401.00L834.38 3.00M640.00 401.00L844.89 3.00M640.00 401.00L856.60 3.00M640.00 401.00L869.73 3.00M640.00 401.00L884.55 3.00M640.00 401.00L901.41 3.00M640.00 401.00L920.78 3.00M640.00 401.00L943.24 3.00M640.00 401.00L969.61 3.00M640.00 401.00L1001.00 3.00M640.00 401.00L1039.00 3.00M640.00 401.00L1085.94 3.00M640.00 401.00L1145.40 3.00M640.00 401.00L1223.15 3.00M640.00 401.00L1329.18 3.00M640.00 401.00L1445.00 20.64M640.00 401.00L1445.00 105.16M640.00 401.00L1445.00 189.69M640.00 401.00L1445.00 274.21M640.00 401.00L1445.00 358.74M640.00 401.00L1445.00 443.26M640.00 401.00L1445.00 527.79M640.00 401.00L1445.00 612.31M640.00 401.00L1445.00 696.84M640.00 401.00L1445.00 781.36M640.00 401.00L1334.37 802.00M640.00 401.00L1227.55 802.00M640.00 401.00L1149.21 802.00M640.00 401.00L1089.30 802.00M640.00 401.00L1042.01 802.00M640.00 401.00L1003.72 802.00M640.00 401.00L972.09 802.00M640.00 401.00L945.52 802.00M640.00 401.00L922.89 802.00M640.00 401.00L903.38 802.00M640.00 401.00L886.39 802.00M640.00 401.00L871.46 802.00M640.00 401.00L858.23 802.00M640.00 401.00L846.44 802.00M640.00 401.00L835.85 802.00M640.00 401.00L826.30 802.00M640.00 401.00L817.63 802.00M640.00 401.00L809.74 802.00M640.00 401.00L802.51 802.00M640.00 401.00L795.88 802.00M640.00 401.00L789.77 802.00M640.00 401.00L784.12 802.00M640.00 401.00L778.87 802.00M640.00 401.00L774.00 802.00M640.00 401.00L769.46 802.00M640.00 401.00L765.21 802.00M640.00 401.00L761.24 802.00M640.00 401.00L757.51 802.00M640.00 401.00L754.00 802.00M640.00 401.00L750.70 802.00M640.00 401.00L747.58 802.00M640.00 401.00L744.63 802.00M640.00 401.00L741.84 802.00M640.00 401.00L739.20 802.00M640.00 401.00L736.68 802.00M640.00 401.00L734.30 802.00M640.00 401.00L732.03 802.00M640.00 401.00L729.86 802.00M640.00 401.00L727.79 802.00M640.00 401.00L725.82 802.00M640.00 401.00L723.94 802.00M640.00 401.00L722.13 802.00M640.00 401.00L720.40 802.00M640.00 401.00L718.74 802.00M640.00 401.00L717.15 802.00M640.00 401.00L715.62 802.00M640.00 401.00L714.16 802.00M640.00 401.00L712.74 802.00" stroke="#d0dcc2" stroke-width="1" fill="none"/><path d="M748.5 3V802M750.5 3V802M752.5 3V802M754.5 3V802M756.5 3V802M758.5 3V802M760.5 3V802M762.5 3V802M764.5 3V802M766.5 3V802M769.5 3V802M771.5 3V802M774.5 3V802M777.5 3V802M779.5 3V802M782.5 3V802M785.5 3V802M789.5 3V802M792.5 3V802M795.5 3V802M799.5 3V802M803.5 3V802M807.5 3V802M811.5 3V802M815.5 3V802M820.5 3V802M825.5 3V802M830.5 3V802M835.5 3V802M841.5 3V802M847.5 3V802M854.5 3V802M861.5 3V802M868.5 3V802M876.5 3V802M885.5 3V802M894.5 3V802M904.5 3V802M914.5 3V802M926.5 3V802M938.5 3V802M952.5 3V802M967.5 3V802M983.5 3V802M1001.5 3V802M1022.5 3V802M1044.5 3V802M1070.5 3V802M1099.5 3V802M1132.5 3V802M1170.5 3V802M1215.5 3V802M1268.5 3V802M1331.5 3V802M1410.5 3V802" stroke="#d8e9cc" stroke-width="1" fill="none"/></g><rect x="935.5" y="61.5" width="469" height="656" fill="none" stroke="#a29cdc" stroke-width="1"/><rect x="944.5" y="70.5" width="451" height="638" fill="none" stroke="#c3bfd9" stroke-width="1.5"/><rect x="984.5" y="125.5" width="371" height="526" fill="none" stroke="#c3bfd9" stroke-width="1.2"/><path d="M944.5 43L944.5 61.5M1395.5 43L1395.5 61.5M944.5 717.5L944.5 735M1395.5 717.5L1395.5 735M927 70.5L935.5 70.5M1404.5 70.5L1413 70.5M927 708.5L935.5 708.5M1404.5 708.5L1413 708.5M1152 52.5L1188 52.5M1152 726.5L1188 726.5M927.5 371.5L927.5 406.5M918 389.5L936 389.5M1412.5 372L1412.5 406M1404 389.5L1421 389.5" stroke="#a29cdc" stroke-width="1" fill="none"/><g clip-path="url(#cv)"><path d="M640 401L1445 181M678 3L1445 353.5M597 802L1445 444M640 401L1445 603M1207.5 3L1207.5 802" stroke="#8a3cff" stroke-width="1" fill="none" stroke-opacity="0.62"/><path d="M520 401.5H1445" stroke="#1e3ce0" stroke-width="1" stroke-opacity="0.62"/></g><g clip-path="url(#paper)"><g><line x1="988" y1="310" x2="1206" y2="251" stroke="#a6d69c" stroke-width="2.00" stroke-opacity="0.69" stroke-linecap="round"/><line x1="992" y1="318" x2="1200" y2="258" stroke="#a6d69c" stroke-width="2.40" stroke-opacity="0.56" stroke-linecap="round"/><line x1="1000" y1="322" x2="1180" y2="270" stroke="#a6d69c" stroke-width="1.60" stroke-opacity="0.50" stroke-linecap="round"/><line x1="975" y1="316" x2="1150" y2="268" stroke="#a6d69c" stroke-width="1.20" stroke-opacity="0.50" stroke-linecap="round"/><line x1="1210" y1="252" x2="1352" y2="316" stroke="#a6d69c" stroke-width="2.40" stroke-opacity="0.69" stroke-linecap="round"/><line x1="1214" y1="262" x2="1340" y2="322" stroke="#a6d69c" stroke-width="2.80" stroke-opacity="0.56" stroke-linecap="round"/><line x1="1222" y1="272" x2="1320" y2="320" stroke="#a6d69c" stroke-width="1.60" stroke-opacity="0.50" stroke-linecap="round"/><line x1="1200" y1="244" x2="1370" y2="322" stroke="#a6d69c" stroke-width="1.20" stroke-opacity="0.44" stroke-linecap="round"/><line x1="986" y1="484" x2="1206" y2="540" stroke="#a6d69c" stroke-width="2.40" stroke-opacity="0.62" stroke-linecap="round"/><line x1="1090" y1="512" x2="1205" y2="541" stroke="#a6d69c" stroke-width="4.00" stroke-opacity="0.69" stroke-linecap="round"/><line x1="1000" y1="494" x2="1190" y2="543" stroke="#a6d69c" stroke-width="1.60" stroke-opacity="0.50" stroke-linecap="round"/><line x1="960" y1="478" x2="1120" y2="512" stroke="#a6d69c" stroke-width="1.20" stroke-opacity="0.44" stroke-linecap="round"/><line x1="1211" y1="536" x2="1352" y2="478" stroke="#a6d69c" stroke-width="3.20" stroke-opacity="0.62" stroke-linecap="round"/><line x1="1216" y1="528" x2="1346" y2="474" stroke="#a6d69c" stroke-width="2.00" stroke-opacity="0.56" stroke-linecap="round"/><line x1="1230" y1="522" x2="1320" y2="488" stroke="#a6d69c" stroke-width="1.60" stroke-opacity="0.50" stroke-linecap="round"/><line x1="986" y1="480" x2="1162" y2="458" stroke="#a6d69c" stroke-width="2.40" stroke-opacity="0.62" stroke-linecap="round"/><line x1="990" y1="488" x2="1150" y2="466" stroke="#a6d69c" stroke-width="1.60" stroke-opacity="0.44" stroke-linecap="round"/><line x1="1162" y1="460" x2="1352" y2="478" stroke="#a6d69c" stroke-width="2.00" stroke-opacity="0.56" stroke-linecap="round"/><line x1="1290" y1="493" x2="1355" y2="482" stroke="#a6d69c" stroke-width="1.60" stroke-opacity="0.50" stroke-linecap="round"/><line x1="988" y1="312" x2="1162" y2="338" stroke="#a6d69c" stroke-width="1.60" stroke-opacity="0.56" stroke-linecap="round"/><line x1="1000" y1="320" x2="1140" y2="340" stroke="#a6d69c" stroke-width="1.20" stroke-opacity="0.44" stroke-linecap="round"/><line x1="1165" y1="340" x2="1352" y2="314" stroke="#a6d69c" stroke-width="2.00" stroke-opacity="0.56" stroke-linecap="round"/><line x1="1190" y1="330" x2="1350" y2="317" stroke="#a6d69c" stroke-width="1.20" stroke-opacity="0.50" stroke-linecap="round"/><line x1="1073" y1="328" x2="1158" y2="312" stroke="#a6d69c" stroke-width="1.60" stroke-opacity="0.56" stroke-linecap="round"/><line x1="1090" y1="355" x2="1150" y2="343" stroke="#a6d69c" stroke-width="1.60" stroke-opacity="0.56" stroke-linecap="round"/><line x1="1227" y1="354" x2="1316" y2="347" stroke="#a6d69c" stroke-width="1.60" stroke-opacity="0.56" stroke-linecap="round"/><line x1="965" y1="398" x2="1390" y2="400" stroke="#a6d69c" stroke-width="2.00" stroke-opacity="0.56" stroke-linecap="round"/><line x1="980" y1="404" x2="1380" y2="405" stroke="#a6d69c" stroke-width="1.20" stroke-opacity="0.44" stroke-linecap="round"/><line x1="1255" y1="408" x2="1367" y2="411" stroke="#a6d69c" stroke-width="2.40" stroke-opacity="0.62" stroke-linecap="round"/><line x1="1258" y1="414" x2="1350" y2="413" stroke="#a6d69c" stroke-width="1.60" stroke-opacity="0.56" stroke-linecap="round"/><line x1="1088" y1="413" x2="1150" y2="416" stroke="#a6d69c" stroke-width="1.60" stroke-opacity="0.56" stroke-linecap="round"/><line x1="1250" y1="430" x2="1320" y2="432" stroke="#a6d69c" stroke-width="1.60" stroke-opacity="0.56" stroke-linecap="round"/><line x1="1227" y1="455" x2="1282" y2="447" stroke="#a6d69c" stroke-width="1.60" stroke-opacity="0.56" stroke-linecap="round"/><line x1="1258" y1="445" x2="1282" y2="440" stroke="#a6d69c" stroke-width="1.60" stroke-opacity="0.56" stroke-linecap="round"/><line x1="1258" y1="470" x2="1300" y2="468" stroke="#a6d69c" stroke-width="1.20" stroke-opacity="0.50" stroke-linecap="round"/><line x1="1255" y1="480" x2="1290" y2="478" stroke="#a6d69c" stroke-width="1.20" stroke-opacity="0.50" stroke-linecap="round"/><line x1="1240" y1="500" x2="1300" y2="485" stroke="#a6d69c" stroke-width="1.60" stroke-opacity="0.50" stroke-linecap="round"/><line x1="1020" y1="372" x2="1150" y2="370" stroke="#a6d69c" stroke-width="1.20" stroke-opacity="0.38" stroke-linecap="round"/><line x1="986" y1="270" x2="984" y2="525" stroke="#a6d69c" stroke-width="2.80" stroke-opacity="0.62" stroke-linecap="round"/><line x1="982" y1="300" x2="983" y2="500" stroke="#a6d69c" stroke-width="1.60" stroke-opacity="0.50" stroke-linecap="round"/><line x1="1212" y1="228" x2="1211" y2="560" stroke="#a6d69c" stroke-width="3.20" stroke-opacity="0.62" stroke-linecap="round"/><line x1="1218" y1="225" x2="1213" y2="420" stroke="#a6d69c" stroke-width="1.60" stroke-opacity="0.56" stroke-linecap="round"/><line x1="1204" y1="250" x2="1205" y2="550" stroke="#a6d69c" stroke-width="1.60" stroke-opacity="0.50" stroke-linecap="round"/><line x1="1358" y1="280" x2="1357" y2="560" stroke="#a6d69c" stroke-width="2.80" stroke-opacity="0.62" stroke-linecap="round"/><line x1="1352" y1="300" x2="1354" y2="520" stroke="#a6d69c" stroke-width="1.60" stroke-opacity="0.50" stroke-linecap="round"/><line x1="1078" y1="310" x2="1078" y2="505" stroke="#a6d69c" stroke-width="1.60" stroke-opacity="0.56" stroke-linecap="round"/><line x1="1097" y1="340" x2="1098" y2="470" stroke="#a6d69c" stroke-width="1.60" stroke-opacity="0.50" stroke-linecap="round"/><line x1="1152" y1="290" x2="1152" y2="520" stroke="#a6d69c" stroke-width="2.00" stroke-opacity="0.56" stroke-linecap="round"/><line x1="1168" y1="300" x2="1169" y2="500" stroke="#a6d69c" stroke-width="1.60" stroke-opacity="0.50" stroke-linecap="round"/><line x1="1231" y1="350" x2="1231" y2="425" stroke="#a6d69c" stroke-width="1.60" stroke-opacity="0.50" stroke-linecap="round"/><line x1="1295" y1="340" x2="1295" y2="420" stroke="#a6d69c" stroke-width="1.60" stroke-opacity="0.50" stroke-linecap="round"/><line x1="1258" y1="440" x2="1258" y2="496" stroke="#a6d69c" stroke-width="1.60" stroke-opacity="0.56" stroke-linecap="round"/><line x1="1268" y1="445" x2="1268" y2="490" stroke="#a6d69c" stroke-width="1.20" stroke-opacity="0.50" stroke-linecap="round"/><line x1="1281" y1="440" x2="1281" y2="492" stroke="#a6d69c" stroke-width="1.60" stroke-opacity="0.56" stroke-linecap="round"/><line x1="1290" y1="410" x2="1290" y2="510" stroke="#a6d69c" stroke-width="1.60" stroke-opacity="0.50" stroke-linecap="round"/><line x1="1323" y1="410" x2="1323" y2="500" stroke="#a6d69c" stroke-width="1.60" stroke-opacity="0.50" stroke-linecap="round"/><line x1="1340" y1="380" x2="1338" y2="470" stroke="#a6d69c" stroke-width="1.20" stroke-opacity="0.44" stroke-linecap="round"/><line x1="1000" y1="420" x2="1001" y2="500" stroke="#a6d69c" stroke-width="1.20" stroke-opacity="0.44" stroke-linecap="round"/><line x1="1120" y1="320" x2="1121" y2="470" stroke="#a6d69c" stroke-width="1.20" stroke-opacity="0.44" stroke-linecap="round"/><line x1="1240" y1="300" x2="1240" y2="420" stroke="#a6d69c" stroke-width="1.20" stroke-opacity="0.44" stroke-linecap="round"/><line x1="984" y1="262" x2="986" y2="300" stroke="#a6d69c" stroke-width="1.60" stroke-opacity="0.50" stroke-linecap="round"/><line x1="983" y1="500" x2="985" y2="530" stroke="#a6d69c" stroke-width="1.60" stroke-opacity="0.50" stroke-linecap="round"/><line x1="1357" y1="270" x2="1358" y2="300" stroke="#a6d69c" stroke-width="1.60" stroke-opacity="0.50" stroke-linecap="round"/><line x1="1356" y1="495" x2="1357" y2="565" stroke="#a6d69c" stroke-width="2.00" stroke-opacity="0.50" stroke-linecap="round"/><line x1="1209" y1="225" x2="1211" y2="250" stroke="#a6d69c" stroke-width="1.60" stroke-opacity="0.50" stroke-linecap="round"/><line x1="1205" y1="545" x2="1207" y2="570" stroke="#a6d69c" stroke-width="1.60" stroke-opacity="0.50" stroke-linecap="round"/><line x1="1226" y1="225" x2="1214" y2="300" stroke="#a6d69c" stroke-width="1.20" stroke-opacity="0.50" stroke-linecap="round"/><line x1="1340" y1="290" x2="1362" y2="560" stroke="#a6d69c" stroke-width="1.20" stroke-opacity="0.44" stroke-linecap="round"/><line x1="970" y1="318" x2="990" y2="490" stroke="#a6d69c" stroke-width="1.20" stroke-opacity="0.38" stroke-linecap="round"/><line x1="1195" y1="250" x2="1230" y2="540" stroke="#a6d69c" stroke-width="0.96" stroke-opacity="0.38" stroke-linecap="round"/><line x1="1150" y1="270" x2="1290" y2="330" stroke="#a6d69c" stroke-width="0.96" stroke-opacity="0.38" stroke-linecap="round"/><line x1="1240" y1="300" x2="1355" y2="330" stroke="#a6d69c" stroke-width="0.96" stroke-opacity="0.38" stroke-linecap="round"/><line x1="1095" y1="300" x2="1145" y2="480" stroke="#a6d69c" stroke-width="0.96" stroke-opacity="0.38" stroke-linecap="round"/><line x1="1310" y1="380" x2="1340" y2="520" stroke="#a6d69c" stroke-width="0.96" stroke-opacity="0.38" stroke-linecap="round"/><line x1="1020" y1="470" x2="1200" y2="520" stroke="#a6d69c" stroke-width="1.20" stroke-opacity="0.44" stroke-linecap="round"/><line x1="1225" y1="510" x2="1340" y2="470" stroke="#a6d69c" stroke-width="1.20" stroke-opacity="0.44" stroke-linecap="round"/></g><g><line x1="957" y1="313.6" x2="1245.2" y2="235.2" stroke="#2b2146" stroke-width="1.8"/><line x1="1208" y1="245.5" x2="1371.6" y2="319" stroke="#2b2146" stroke-width="1.8"/><path d="M984 296V508M1208 220V560M1356.7 296V497" stroke="#262629" stroke-width="1.8"/><line x1="946.2" y1="478.4" x2="1230" y2="548.8" stroke="#2b2146" stroke-width="1.8"/><line x1="1195" y1="549.5" x2="1378.4" y2="472.5" stroke="#2b2146" stroke-width="1.8"/><line x1="983.6" y1="306.8" x2="1189.7" y2="340.7" stroke="#3c3c42" stroke-width="1.0"/><line x1="1092.8" y1="345.3" x2="1356.7" y2="311.8" stroke="#3c3c42" stroke-width="1.0"/><line x1="1163.2" y1="333" x2="1163.2" y2="471.7" stroke="#333338" stroke-width="1.3"/><line x1="981" y1="486" x2="1177.5" y2="457.6" stroke="#3c3c42" stroke-width="1.0"/><line x1="1099.9" y1="453.3" x2="1356.7" y2="481.2" stroke="#3c3c42" stroke-width="1.0"/></g></g><circle cx="939.7" cy="318.2" r="5.6" fill="#000" fill-opacity="0.07"/><circle cx="939.7" cy="318.2" r="4.4" fill="#fff"/><circle cx="939.7" cy="318.2" r="3.3" fill="#2a7ed2"/><circle cx="1027.4" cy="294.7" r="5.6" fill="#000" fill-opacity="0.07"/><circle cx="1027.4" cy="294.7" r="4.4" fill="#fff"/><circle cx="1027.4" cy="294.7" r="3.3" fill="#2a7ed2"/><circle cx="1315.6" cy="292.8" r="5.6" fill="#000" fill-opacity="0.07"/><circle cx="1315.6" cy="292.8" r="4.4" fill="#fff"/><circle cx="1315.6" cy="292.8" r="3.3" fill="#2a7ed2"/><circle cx="1398.1" cy="331.3" r="5.6" fill="#000" fill-opacity="0.07"/><circle cx="1398.1" cy="331.3" r="4.4" fill="#fff"/><circle cx="1398.1" cy="331.3" r="3.3" fill="#2a7ed2"/><circle cx="1161.3" cy="400.7" r="5.6" fill="#000" fill-opacity="0.07"/><circle cx="1161.3" cy="400.7" r="4.4" fill="#fff"/><circle cx="1161.3" cy="400.7" r="3.3" fill="#2a7ed2"/><circle cx="1252.5" cy="400.8" r="5.6" fill="#000" fill-opacity="0.07"/><circle cx="1252.5" cy="400.8" r="4.4" fill="#fff"/><circle cx="1252.5" cy="400.8" r="3.3" fill="#2a7ed2"/><circle cx="980.9" cy="486" r="5.6" fill="#000" fill-opacity="0.07"/><circle cx="980.9" cy="486" r="4.4" fill="#fff"/><circle cx="980.9" cy="486" r="3.3" fill="#2a7ed2"/><circle cx="1068.5" cy="508.2" r="5.6" fill="#000" fill-opacity="0.07"/><circle cx="1068.5" cy="508.2" r="4.4" fill="#fff"/><circle cx="1068.5" cy="508.2" r="3.3" fill="#2a7ed2"/><circle cx="1219.4" cy="539.3" r="5.6" fill="#000" fill-opacity="0.07"/><circle cx="1219.4" cy="539.3" r="4.4" fill="#fff"/><circle cx="1219.4" cy="539.3" r="3.3" fill="#2a7ed2"/><circle cx="1304" cy="504.2" r="5.6" fill="#000" fill-opacity="0.07"/><circle cx="1304" cy="504.2" r="4.4" fill="#fff"/><circle cx="1304" cy="504.2" r="3.3" fill="#2a7ed2"/><circle cx="983.6" cy="306.8" r="7.6" fill="#000" fill-opacity="0.07"/><circle cx="983.6" cy="306.8" r="6.3" fill="#fff"/><circle cx="983.6" cy="306.8" r="4.8" fill="#fff" stroke="#2a7ed2" stroke-width="1.5"/><circle cx="1356.7" cy="311.8" r="7.6" fill="#000" fill-opacity="0.07"/><circle cx="1356.7" cy="311.8" r="6.3" fill="#fff"/><circle cx="1356.7" cy="311.8" r="4.8" fill="#fff" stroke="#2a7ed2" stroke-width="1.5"/><circle cx="1024.7" cy="496.8" r="7.6" fill="#000" fill-opacity="0.07"/><circle cx="1024.7" cy="496.8" r="6.3" fill="#fff"/><circle cx="1024.7" cy="496.8" r="4.8" fill="#fff" stroke="#2a7ed2" stroke-width="1.5"/><circle cx="1262" cy="521.8" r="7.6" fill="#000" fill-opacity="0.07"/><circle cx="1262" cy="521.8" r="6.3" fill="#fff"/><circle cx="1262" cy="521.8" r="4.8" fill="#fff" stroke="#2a7ed2" stroke-width="1.5"/><path d="M1005 321L1012 328L1005 335L998 328Z" fill="#fff" fill-opacity="0.7"/><path d="M1005 323L1010 328L1005 333L1000 328Z" fill="#fff" stroke="#2a7ed2" stroke-width="1.5"/><path d="M1377.8 326.2L1384.8 333.2L1377.8 340.2L1370.8 333.2Z" fill="#fff" fill-opacity="0.7"/><path d="M1377.8 328.2L1382.8 333.2L1377.8 338.2L1372.8 333.2Z" fill="#fff" stroke="#2a7ed2" stroke-width="1.5"/><path d="M1045.8 511.20000000000005L1052.8 518.2L1045.8 525.2L1038.8 518.2Z" fill="#fff" fill-opacity="0.7"/><path d="M1045.8 513.2L1050.8 518.2L1045.8 523.2L1040.8 518.2Z" fill="#fff" stroke="#2a7ed2" stroke-width="1.5"/><path d="M1283.1 535.6L1290.1 542.6L1283.1 549.6L1276.1 542.6Z" fill="#fff" fill-opacity="0.7"/><path d="M1283.1 537.6L1288.1 542.6L1283.1 547.6L1278.1 542.6Z" fill="#fff" stroke="#2a7ed2" stroke-width="1.5"/><circle cx="1206.4" cy="400.7" r="7.2" fill="#fff" fill-opacity="0.85"/><circle cx="1206.4" cy="400.7" r="5.6" fill="#fff" stroke="#2a7ed2" stroke-width="1.4"/><path d="M1200.8000000000002 400.7A5.6 5.6 0 0 0 1212.0 400.7Z" fill="#2a7ed2"/><circle cx="1115.5" cy="336" r="14.5" fill="#000" fill-opacity="0.08"/><circle cx="1115.5" cy="336" r="13" fill="#fff"/><path d="M1106.5 336H1124.5M1115.5 327V345" stroke="#2a7ed2" stroke-width="2.3"/><path d="M1104.5 336l4.5 -4v8zM1126.5 336l-4.5 -4v8zM1115.5 325l-4 4.5h8zM1115.5 347l-4 -4.5h8z" fill="#2a7ed2"/><circle cx="1115.5" cy="336" r="2" fill="#fff" stroke="#2a7ed2" stroke-width="1.2"/><circle cx="1096" cy="315.8" r="7.6" fill="#000" fill-opacity="0.07"/><circle cx="1096" cy="315.8" r="6.6" fill="#fff"/><circle cx="1096" cy="315.8" r="3.8" fill="none" stroke="#2a7ed2" stroke-width="2.2" stroke-dasharray="4 2" stroke-dashoffset="1"/><path d="M1138.3 350.2L1145.8 357.7L1138.3 365.2L1130.8 357.7Z" fill="#fff" fill-opacity="0.7"/><path d="M1138.3 352.2L1143.8 357.7L1138.3 363.2L1132.8 357.7Z" fill="#fff" stroke="#2a7ed2" stroke-width="1.4"/><path d="M1138.3 353.7L1142.3 357.7L1138.3 361.7L1134.3 357.7Z" fill="#2a7ed2"/><circle cx="1138.3" cy="355.9" r="1" fill="#fff"/><circle cx="1138.3" cy="359.5" r="1" fill="#fff"/><circle cx="1136.5" cy="357.7" r="1" fill="#fff"/><circle cx="1140.1" cy="357.7" r="1" fill="#fff"/><rect x="1220.6" y="324.7" width="14" height="12" rx="4" fill="#fff" fill-opacity="0.7"/><path d="M1225.6 326.7L1221.6 330.7L1225.6 334.7M1229.6 326.7L1233.6 330.7L1229.6 334.7M1227.6 325.7V335.7" stroke="#2a7ed2" stroke-width="1.3" fill="none"/><circle cx="1169.4" cy="597" r="6" fill="#fff" fill-opacity="0.8"/><path d="M1165.4 593L1173.4 601M1173.4 593L1165.4 601M1164.9 597H1173.9" stroke="#2a7ed2" stroke-width="1.3"/><circle cx="1169.4" cy="597" r="3.6" fill="none" stroke="#2a7ed2" stroke-width="1"/><circle cx="640.5" cy="401" r="6.8" fill="#fff"/><circle cx="640.5" cy="401" r="5" fill="#2a7ed2"/><circle cx="640.5" cy="401" r="1.8" fill="#fff"/><g clip-path="url(#navc)"><g transform="translate(-395.541,188.796) scale(0.43954,0.43826)"><g><line x1="988" y1="310" x2="1206" y2="251" stroke="#a6d69c" stroke-width="2.00" stroke-opacity="0.69" stroke-linecap="round"/><line x1="992" y1="318" x2="1200" y2="258" stroke="#a6d69c" stroke-width="2.40" stroke-opacity="0.56" stroke-linecap="round"/><line x1="1000" y1="322" x2="1180" y2="270" stroke="#a6d69c" stroke-width="1.60" stroke-opacity="0.50" stroke-linecap="round"/><line x1="975" y1="316" x2="1150" y2="268" stroke="#a6d69c" stroke-width="1.20" stroke-opacity="0.50" stroke-linecap="round"/><line x1="1210" y1="252" x2="1352" y2="316" stroke="#a6d69c" stroke-width="2.40" stroke-opacity="0.69" stroke-linecap="round"/><line x1="1214" y1="262" x2="1340" y2="322" stroke="#a6d69c" stroke-width="2.80" stroke-opacity="0.56" stroke-linecap="round"/><line x1="1222" y1="272" x2="1320" y2="320" stroke="#a6d69c" stroke-width="1.60" stroke-opacity="0.50" stroke-linecap="round"/><line x1="1200" y1="244" x2="1370" y2="322" stroke="#a6d69c" stroke-width="1.20" stroke-opacity="0.44" stroke-linecap="round"/><line x1="986" y1="484" x2="1206" y2="540" stroke="#a6d69c" stroke-width="2.40" stroke-opacity="0.62" stroke-linecap="round"/><line x1="1090" y1="512" x2="1205" y2="541" stroke="#a6d69c" stroke-width="4.00" stroke-opacity="0.69" stroke-linecap="round"/><line x1="1000" y1="494" x2="1190" y2="543" stroke="#a6d69c" stroke-width="1.60" stroke-opacity="0.50" stroke-linecap="round"/><line x1="960" y1="478" x2="1120" y2="512" stroke="#a6d69c" stroke-width="1.20" stroke-opacity="0.44" stroke-linecap="round"/><line x1="1211" y1="536" x2="1352" y2="478" stroke="#a6d69c" stroke-width="3.20" stroke-opacity="0.62" stroke-linecap="round"/><line x1="1216" y1="528" x2="1346" y2="474" stroke="#a6d69c" stroke-width="2.00" stroke-opacity="0.56" stroke-linecap="round"/><line x1="1230" y1="522" x2="1320" y2="488" stroke="#a6d69c" stroke-width="1.60" stroke-opacity="0.50" stroke-linecap="round"/><line x1="986" y1="480" x2="1162" y2="458" stroke="#a6d69c" stroke-width="2.40" stroke-opacity="0.62" stroke-linecap="round"/><line x1="990" y1="488" x2="1150" y2="466" stroke="#a6d69c" stroke-width="1.60" stroke-opacity="0.44" stroke-linecap="round"/><line x1="1162" y1="460" x2="1352" y2="478" stroke="#a6d69c" stroke-width="2.00" stroke-opacity="0.56" stroke-linecap="round"/><line x1="1290" y1="493" x2="1355" y2="482" stroke="#a6d69c" stroke-width="1.60" stroke-opacity="0.50" stroke-linecap="round"/><line x1="988" y1="312" x2="1162" y2="338" stroke="#a6d69c" stroke-width="1.60" stroke-opacity="0.56" stroke-linecap="round"/><line x1="1000" y1="320" x2="1140" y2="340" stroke="#a6d69c" stroke-width="1.20" stroke-opacity="0.44" stroke-linecap="round"/><line x1="1165" y1="340" x2="1352" y2="314" stroke="#a6d69c" stroke-width="2.00" stroke-opacity="0.56" stroke-linecap="round"/><line x1="1190" y1="330" x2="1350" y2="317" stroke="#a6d69c" stroke-width="1.20" stroke-opacity="0.50" stroke-linecap="round"/><line x1="1073" y1="328" x2="1158" y2="312" stroke="#a6d69c" stroke-width="1.60" stroke-opacity="0.56" stroke-linecap="round"/><line x1="1090" y1="355" x2="1150" y2="343" stroke="#a6d69c" stroke-width="1.60" stroke-opacity="0.56" stroke-linecap="round"/><line x1="1227" y1="354" x2="1316" y2="347" stroke="#a6d69c" stroke-width="1.60" stroke-opacity="0.56" stroke-linecap="round"/><line x1="965" y1="398" x2="1390" y2="400" stroke="#a6d69c" stroke-width="2.00" stroke-opacity="0.56" stroke-linecap="round"/><line x1="980" y1="404" x2="1380" y2="405" stroke="#a6d69c" stroke-width="1.20" stroke-opacity="0.44" stroke-linecap="round"/><line x1="1255" y1="408" x2="1367" y2="411" stroke="#a6d69c" stroke-width="2.40" stroke-opacity="0.62" stroke-linecap="round"/><line x1="1258" y1="414" x2="1350" y2="413" stroke="#a6d69c" stroke-width="1.60" stroke-opacity="0.56" stroke-linecap="round"/><line x1="1088" y1="413" x2="1150" y2="416" stroke="#a6d69c" stroke-width="1.60" stroke-opacity="0.56" stroke-linecap="round"/><line x1="1250" y1="430" x2="1320" y2="432" stroke="#a6d69c" stroke-width="1.60" stroke-opacity="0.56" stroke-linecap="round"/><line x1="1227" y1="455" x2="1282" y2="447" stroke="#a6d69c" stroke-width="1.60" stroke-opacity="0.56" stroke-linecap="round"/><line x1="1258" y1="445" x2="1282" y2="440" stroke="#a6d69c" stroke-width="1.60" stroke-opacity="0.56" stroke-linecap="round"/><line x1="1258" y1="470" x2="1300" y2="468" stroke="#a6d69c" stroke-width="1.20" stroke-opacity="0.50" stroke-linecap="round"/><line x1="1255" y1="480" x2="1290" y2="478" stroke="#a6d69c" stroke-width="1.20" stroke-opacity="0.50" stroke-linecap="round"/><line x1="1240" y1="500" x2="1300" y2="485" stroke="#a6d69c" stroke-width="1.60" stroke-opacity="0.50" stroke-linecap="round"/><line x1="1020" y1="372" x2="1150" y2="370" stroke="#a6d69c" stroke-width="1.20" stroke-opacity="0.38" stroke-linecap="round"/><line x1="986" y1="270" x2="984" y2="525" stroke="#a6d69c" stroke-width="2.80" stroke-opacity="0.62" stroke-linecap="round"/><line x1="982" y1="300" x2="983" y2="500" stroke="#a6d69c" stroke-width="1.60" stroke-opacity="0.50" stroke-linecap="round"/><line x1="1212" y1="228" x2="1211" y2="560" stroke="#a6d69c" stroke-width="3.20" stroke-opacity="0.62" stroke-linecap="round"/><line x1="1218" y1="225" x2="1213" y2="420" stroke="#a6d69c" stroke-width="1.60" stroke-opacity="0.56" stroke-linecap="round"/><line x1="1204" y1="250" x2="1205" y2="550" stroke="#a6d69c" stroke-width="1.60" stroke-opacity="0.50" stroke-linecap="round"/><line x1="1358" y1="280" x2="1357" y2="560" stroke="#a6d69c" stroke-width="2.80" stroke-opacity="0.62" stroke-linecap="round"/><line x1="1352" y1="300" x2="1354" y2="520" stroke="#a6d69c" stroke-width="1.60" stroke-opacity="0.50" stroke-linecap="round"/><line x1="1078" y1="310" x2="1078" y2="505" stroke="#a6d69c" stroke-width="1.60" stroke-opacity="0.56" stroke-linecap="round"/><line x1="1097" y1="340" x2="1098" y2="470" stroke="#a6d69c" stroke-width="1.60" stroke-opacity="0.50" stroke-linecap="round"/><line x1="1152" y1="290" x2="1152" y2="520" stroke="#a6d69c" stroke-width="2.00" stroke-opacity="0.56" stroke-linecap="round"/><line x1="1168" y1="300" x2="1169" y2="500" stroke="#a6d69c" stroke-width="1.60" stroke-opacity="0.50" stroke-linecap="round"/><line x1="1231" y1="350" x2="1231" y2="425" stroke="#a6d69c" stroke-width="1.60" stroke-opacity="0.50" stroke-linecap="round"/><line x1="1295" y1="340" x2="1295" y2="420" stroke="#a6d69c" stroke-width="1.60" stroke-opacity="0.50" stroke-linecap="round"/><line x1="1258" y1="440" x2="1258" y2="496" stroke="#a6d69c" stroke-width="1.60" stroke-opacity="0.56" stroke-linecap="round"/><line x1="1268" y1="445" x2="1268" y2="490" stroke="#a6d69c" stroke-width="1.20" stroke-opacity="0.50" stroke-linecap="round"/><line x1="1281" y1="440" x2="1281" y2="492" stroke="#a6d69c" stroke-width="1.60" stroke-opacity="0.56" stroke-linecap="round"/><line x1="1290" y1="410" x2="1290" y2="510" stroke="#a6d69c" stroke-width="1.60" stroke-opacity="0.50" stroke-linecap="round"/><line x1="1323" y1="410" x2="1323" y2="500" stroke="#a6d69c" stroke-width="1.60" stroke-opacity="0.50" stroke-linecap="round"/><line x1="1340" y1="380" x2="1338" y2="470" stroke="#a6d69c" stroke-width="1.20" stroke-opacity="0.44" stroke-linecap="round"/><line x1="1000" y1="420" x2="1001" y2="500" stroke="#a6d69c" stroke-width="1.20" stroke-opacity="0.44" stroke-linecap="round"/><line x1="1120" y1="320" x2="1121" y2="470" stroke="#a6d69c" stroke-width="1.20" stroke-opacity="0.44" stroke-linecap="round"/><line x1="1240" y1="300" x2="1240" y2="420" stroke="#a6d69c" stroke-width="1.20" stroke-opacity="0.44" stroke-linecap="round"/><line x1="984" y1="262" x2="986" y2="300" stroke="#a6d69c" stroke-width="1.60" stroke-opacity="0.50" stroke-linecap="round"/><line x1="983" y1="500" x2="985" y2="530" stroke="#a6d69c" stroke-width="1.60" stroke-opacity="0.50" stroke-linecap="round"/><line x1="1357" y1="270" x2="1358" y2="300" stroke="#a6d69c" stroke-width="1.60" stroke-opacity="0.50" stroke-linecap="round"/><line x1="1356" y1="495" x2="1357" y2="565" stroke="#a6d69c" stroke-width="2.00" stroke-opacity="0.50" stroke-linecap="round"/><line x1="1209" y1="225" x2="1211" y2="250" stroke="#a6d69c" stroke-width="1.60" stroke-opacity="0.50" stroke-linecap="round"/><line x1="1205" y1="545" x2="1207" y2="570" stroke="#a6d69c" stroke-width="1.60" stroke-opacity="0.50" stroke-linecap="round"/><line x1="1226" y1="225" x2="1214" y2="300" stroke="#a6d69c" stroke-width="1.20" stroke-opacity="0.50" stroke-linecap="round"/><line x1="1340" y1="290" x2="1362" y2="560" stroke="#a6d69c" stroke-width="1.20" stroke-opacity="0.44" stroke-linecap="round"/><line x1="970" y1="318" x2="990" y2="490" stroke="#a6d69c" stroke-width="1.20" stroke-opacity="0.38" stroke-linecap="round"/><line x1="1195" y1="250" x2="1230" y2="540" stroke="#a6d69c" stroke-width="0.96" stroke-opacity="0.38" stroke-linecap="round"/><line x1="1150" y1="270" x2="1290" y2="330" stroke="#a6d69c" stroke-width="0.96" stroke-opacity="0.38" stroke-linecap="round"/><line x1="1240" y1="300" x2="1355" y2="330" stroke="#a6d69c" stroke-width="0.96" stroke-opacity="0.38" stroke-linecap="round"/><line x1="1095" y1="300" x2="1145" y2="480" stroke="#a6d69c" stroke-width="0.96" stroke-opacity="0.38" stroke-linecap="round"/><line x1="1310" y1="380" x2="1340" y2="520" stroke="#a6d69c" stroke-width="0.96" stroke-opacity="0.38" stroke-linecap="round"/><line x1="1020" y1="470" x2="1200" y2="520" stroke="#a6d69c" stroke-width="1.20" stroke-opacity="0.44" stroke-linecap="round"/><line x1="1225" y1="510" x2="1340" y2="470" stroke="#a6d69c" stroke-width="1.20" stroke-opacity="0.44" stroke-linecap="round"/></g><g><line x1="957" y1="313.6" x2="1245.2" y2="235.2" stroke="#2b2146" stroke-width="1.8"/><line x1="1208" y1="245.5" x2="1371.6" y2="319" stroke="#2b2146" stroke-width="1.8"/><path d="M984 296V508M1208 220V560M1356.7 296V497" stroke="#43603f" stroke-width="2.6"/><line x1="946.2" y1="478.4" x2="1230" y2="548.8" stroke="#2b2146" stroke-width="1.8"/><line x1="1195" y1="549.5" x2="1378.4" y2="472.5" stroke="#2b2146" stroke-width="1.8"/><line x1="983.6" y1="306.8" x2="1189.7" y2="340.7" stroke="#3c3c42" stroke-width="1.0"/><line x1="1092.8" y1="345.3" x2="1356.7" y2="311.8" stroke="#3c3c42" stroke-width="1.0"/><line x1="981" y1="486" x2="1177.5" y2="457.6" stroke="#3c3c42" stroke-width="1.0"/><line x1="1099.9" y1="453.3" x2="1356.7" y2="481.2" stroke="#3c3c42" stroke-width="1.0"/></g></g></g><rect x="517" y="802" width="928" height="11" fill="#6a6a6e"/><rect x="520" y="802" width="925" height="1" fill="#5a5a5e"/><rect x="523" y="804" width="34" height="9" fill="#78787c"/><rect x="557" y="803" width="6" height="10" fill="#5e5e62"/><rect x="563" y="804" width="92" height="9" fill="#7a7a7e"/><path d="M567 813L655 804V813Z" fill="#1e1e20"/><text x="653" y="818" font-size="16" fill="#f0f0f0" text-anchor="end" letter-spacing="-1">8.1</text><rect x="655" y="803" width="60" height="10" fill="#6e6e72"/><circle cx="671" cy="809.5" r="6.5" fill="#f0f0f0" stroke="#222" stroke-width="1"/><path d="M668 809H674" stroke="#111" stroke-width="2"/><circle cx="699" cy="809.5" r="6.5" fill="#f0f0f0" stroke="#222" stroke-width="1"/><path d="M696 809H702" stroke="#111" stroke-width="2"/><path d="M699 806V812" stroke="#111" stroke-width="2"/><rect x="717" y="803" width="17" height="10" fill="#1e1e20"/><rect x="721.5" y="806.5" width="8" height="8" fill="none" stroke="#7a7a7e" stroke-width="1.2"/><rect x="740" y="803" width="68" height="10" fill="#7a7a7e"/><path d="M742 805L752 813H742Z" fill="#1e1e20"/><text x="745" y="818" font-size="16" fill="#f0f0f0" letter-spacing="-1">0.0</text><path d="M812 813Q840 795 880 813Z" fill="#1e1e20"/><rect x="877" y="803" width="86" height="10" fill="#6e6e72"/><path d="M886 813A8 8 0 0 1 902 813M918 813A8 8 0 0 1 934 813" stroke="#111" stroke-width="3" fill="none"/><circle cx="951" cy="812" r="6" fill="none" stroke="#444" stroke-width="2.5" stroke-dasharray="2 2"/><rect x="963.5" y="803.5" width="14" height="10" fill="#747478" stroke="#8a8a8e" stroke-width="1"/><path d="M973 806V812L968 809Z" fill="#262628"/><rect x="978" y="803" width="452" height="10" fill="#5e5e62"/><rect x="1050.5" y="803.5" width="215" height="10" rx="1.5" fill="#747478" stroke="#8a8a8e" stroke-width="1"/><path d="M1153.5 806V813M1156.5 806V813M1159.5 806V813" stroke="#3a3a3c" stroke-width="1"/><rect x="1430.5" y="803.5" width="14" height="10" fill="#747478" stroke="#8a8a8e" stroke-width="1"/><path d="M1435 806V812L1440 809Z" fill="#262628"/>
</svg>
</body></html>
